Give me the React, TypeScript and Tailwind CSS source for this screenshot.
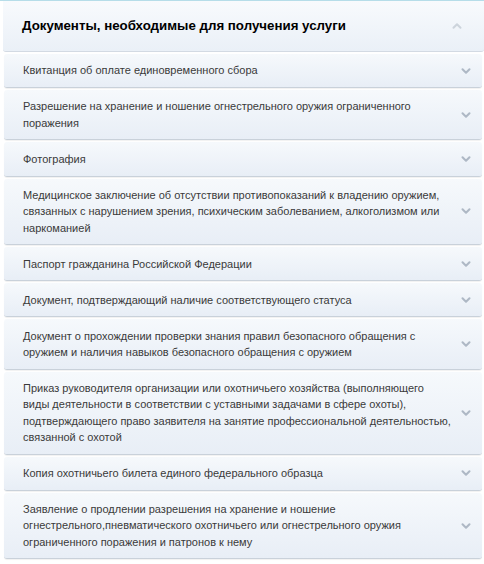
import { ChevronDown, ChevronUp } from 'lucide-react'

// each document title is kept as its display lines
const documents: string[][] = [
  ['Квитанция об оплате единовременного сбора'],
  ['Разрешение на хранение и ношение огнестрельного оружия ограниченного', 'поражения'],
  ['Фотография'],
  [
    'Медицинское заключение об отсутствии противопоказаний к владению оружием,',
    'связанных с нарушением зрения, психическим заболеванием, алкоголизмом или',
    'наркоманией'
  ],
  ['Паспорт гражданина Российской Федерации'],
  ['Документ, подтверждающий наличие соответствующего статуса'],
  [
    'Документ о прохождении проверки знания правил безопасного обращения с',
    'оружием и наличия навыков безопасного обращения с оружием'
  ],
  [
    'Приказ руководителя организации или охотничьего хозяйства (выполняющего',
    'виды деятельности в соответствии с уставными задачами в сфере охоты),',
    'подтверждающего право заявителя на занятие профессиональной деятельностью,',
    'связанной с охотой'
  ],
  ['Копия охотничьего билета единого федерального образца'],
  [
    'Заявление о продлении разрешения на хранение и ношение',
    'огнестрельного,пневматического охотничьего или огнестрельного оружия',
    'ограниченного поражения и патронов к нему'
  ]
]

function DocumentRow({ lines }: { lines: string[] }) {
  return (
    <div className="relative rounded-[3px] border-b border-[#c9d1da] bg-gradient-to-b from-[#f6f9fc] to-[#e8eef6] py-[8.4px] pl-[19px] pr-[12px] shadow-[0_1px_1px_rgba(0,0,0,0.06)]">
      <p className="text-[11px] leading-[16.3px] text-[#3a3a3a]">
        {lines.map(line => (
          <span key={line} className="block whitespace-nowrap">
            {line}
          </span>
        ))}
      </p>
      <ChevronDown
        size={14}
        strokeWidth={3.5}
        className="absolute right-[9px] top-1/2 -translate-y-1/2 text-[#aeb8c5]"
      />
    </div>
  )
}

export default function App() {
  return (
    <div className="h-[564px] w-[484px] overflow-hidden border-t border-[#b6dde9] bg-white font-['Liberation_Sans',Arial,sans-serif]">
      <div className="flex flex-col gap-[2px] pl-[4px] pr-[2px]">
        <div className="-ml-[1px] -mr-[2px] flex items-center rounded-b-[3px] border-b border-[#d3dae3] bg-gradient-to-b from-[#f8fafd] to-[#eaf0f7] py-[16px] pl-[19px] pr-[20px]">
          <h2 className="flex-1 text-[13.3px] font-bold leading-[18px] text-black">
            Документы, необходимые для получения услуги
          </h2>
          <ChevronUp size={14} strokeWidth={3.5} className="text-[#cdd4dc]" />
        </div>
        {documents.map(lines => (
          <DocumentRow key={lines[0]} lines={lines} />
        ))}
      </div>
    </div>
  )
}
